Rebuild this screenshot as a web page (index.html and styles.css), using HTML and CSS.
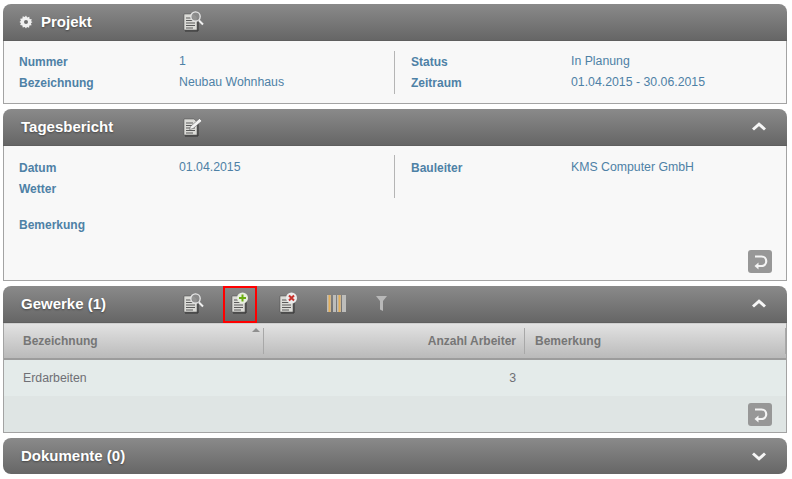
FILE: index.html
```html
<!DOCTYPE html>
<html lang="en">
<head>
    <meta charset="UTF-8">
    <title>Tagesbericht</title>
    <link rel="stylesheet" href="styles.css">
</head>
<body>
    <svg class="defs" width="0" height="0">
        <defs>
            <g id="doc">
                <path d="M1 3h10l3 3v13H1z" fill="#dcdcd8" stroke="#4a4a4a" stroke-width="0.5"/>
                <path d="M3 7h7M3 9.500h9M3 12h9M3 14.500h9M3 17h7" stroke="#5a5a5a" stroke-width="1"/>
                <path d="M2 20h13V7" fill="none" stroke="#333" stroke-width="1"/>
            </g>
            <g id="lens">
                <circle cx="12.500" cy="5.500" r="4.700" fill="#8c8c8c" fill-opacity="0.9" stroke="#e8e8e8" stroke-width="1.300"/>
                <path d="M16 9.500l4 4" stroke="#f0f0f0" stroke-width="2"/>
            </g>
            <g id="back">
                <rect width="24" height="23" rx="3" fill="#979797"/>
                <path d="M7 6.500h6.500a4.750 4.750 0 0 1 0 9.500H10" fill="none" stroke="#f4f4f4" stroke-width="2.200"/>
                <path d="M10.500 12.500L6.500 16l4 3.500z" fill="#f4f4f4"/>
            </g>
        </defs>
    </svg>

    <section class="panel">
        <header class="panel-head">
            <svg class="gear" width="14" height="14" viewBox="0 0 14 14"><path d="M7 .5l1.200 1.900 2.100-.7.300 2.200 2.200.3-.7 2.100L13.500 7l-1.600 1.200.7 2.100-2.200.3-.3 2.200-2.100-.7L7 13.500l-1.200-1.600-2.100.7-.3-2.200-2.200-.3.7-2.100L.5 7l1.400-1.200-.7-2.100 2.200-.3.3-2.200 2.100.7z" fill="#f0f0f0"/><circle cx="7" cy="7" r="2" fill="#6f6f6f"/></svg>
            <h2 class="title title-gear">Projekt</h2>
            <div class="tools">
                <svg class="tool" width="24" height="22" viewBox="0 0 24 22"><use href="#doc"/><use href="#lens"/></svg>
            </div>
        </header>
        <div class="panel-body project-body">
            <div class="form-grid">
                <div class="form-col">
                    <div class="row"><span class="label">Nummer</span><span class="value">1</span></div>
                    <div class="row"><span class="label">Bezeichnung</span><span class="value">Neubau Wohnhaus</span></div>
                </div>
                <div class="form-col col-right">
                    <div class="row"><span class="label">Status</span><span class="value">In Planung</span></div>
                    <div class="row"><span class="label">Zeitraum</span><span class="value">01.04.2015 - 30.06.2015</span></div>
                </div>
            </div>
        </div>
    </section>

    <section class="panel">
        <header class="panel-head">
            <h2 class="title">Tagesbericht</h2>
            <div class="tools">
                <svg class="tool" width="24" height="22" viewBox="0 0 24 22">
                    <use href="#doc"/>
                    <path d="M6.500 13.500l1-3 9-8 2.500 2.500-9 7.500z" fill="#f2f2f2" stroke="#555" stroke-width="0.5"/>
                </svg>
            </div>
            <svg class="chevron" width="14" height="10" viewBox="0 0 14 10"><path d="M1 7.500L7 2.200l6 5.300" fill="none" stroke="#f6f6f6" stroke-width="3"/></svg>
        </header>
        <div class="panel-body report-body">
            <div class="form-grid">
                <div class="form-col">
                    <div class="row"><span class="label">Datum</span><span class="value">01.04.2015</span></div>
                    <div class="row"><span class="label">Wetter</span></div>
                </div>
                <div class="form-col col-right">
                    <div class="row"><span class="label">Bauleiter</span><span class="value">KMS Computer GmbH</span></div>
                </div>
            </div>
            <div class="row remark"><span class="label">Bemerkung</span></div>
            <div class="actions">
                <svg width="24" height="23" viewBox="0 0 24 23"><use href="#back"/></svg>
            </div>
        </div>
    </section>

    <section class="panel">
        <header class="panel-head">
            <h2 class="title">Gewerke (1)</h2>
            <div class="tools">
                <svg class="tool" width="24" height="22" viewBox="0 0 24 22"><use href="#doc"/><use href="#lens"/></svg>
                <span class="tool-hot">
                    <svg class="tool" width="24" height="22" viewBox="0 0 24 22">
                        <use href="#doc"/>
                        <circle cx="11.500" cy="5" r="5.500" fill="#e8efe0"/>
                        <path d="M11.500 1.500v7M8 5h7" stroke="#6aae10" stroke-width="2"/>
                    </svg>
                </span>
                <svg class="tool" width="24" height="22" viewBox="0 0 24 22">
                    <use href="#doc"/>
                    <circle cx="12.500" cy="5" r="5.500" fill="#ececec"/>
                    <path d="M10 2.500l5 5M15 2.500l-5 5" stroke="#c8322c" stroke-width="2"/>
                </svg>
                <svg class="tool" width="24" height="22" viewBox="0 0 24 22">
                    <rect x="1" y="2" width="4" height="17" fill="#bdbdbb"/>
                    <rect x="2.500" y="2" width="2" height="17" fill="#e3ae58"/>
                    <rect x="7" y="2" width="3" height="17" fill="#bdbdbb"/>
                    <rect x="11" y="2" width="4" height="17" fill="#bdbdbb"/>
                    <rect x="12.500" y="2" width="2" height="17" fill="#e3ae58"/>
                    <rect x="16" y="2" width="4" height="17" fill="#bdbdbb"/>
                </svg>
                <svg class="tool" width="24" height="22" viewBox="0 0 24 22"><path d="M3 3h11l-4 5v10l-3-1.500V8z" fill="#b8b8b8"/></svg>
            </div>
            <svg class="chevron" width="14" height="10" viewBox="0 0 14 10"><path d="M1 7.500L7 2.200l6 5.300" fill="none" stroke="#f6f6f6" stroke-width="3"/></svg>
        </header>
        <div class="panel-body table-body">
            <div class="thead">
                <div class="th th-name">Bezeichnung<span class="sort"></span></div>
                <div class="th th-count">Anzahl Arbeiter</div>
                <div class="th th-note">Bemerkung</div>
            </div>
            <div class="tr">
                <div class="td th-name">Erdarbeiten</div>
                <div class="td th-count">3</div>
                <div class="td th-note"></div>
            </div>
            <div class="table-foot">
                <svg width="24" height="23" viewBox="0 0 24 23"><use href="#back"/></svg>
            </div>
        </div>
    </section>

    <section class="panel">
        <header class="panel-head closed">
            <h2 class="title">Dokumente (0)</h2>
            <svg class="chevron" width="14" height="10" viewBox="0 0 14 10"><path d="M1 2.500L7 7.800l6-5.300" fill="none" stroke="#f6f6f6" stroke-width="3"/></svg>
        </header>
    </section>
</body>
</html>
```

FILE: styles.css
```css
body {
    margin: 0;
    padding: 4px 5px 0 3px;
    background: white;
    font-family: "Liberation Sans", Arial, sans-serif;
    font-size: 12px;
}
.defs {
    position: absolute;
}
.panel {
    margin-bottom: 5px;
}
.panel-head {
    display: flex;
    align-items: center;
    height: 37px;
    padding: 0 21px 0 18px;
    border-radius: 8px 8px 0 0;
    background: linear-gradient(#8a8a8a, #666666);
    border-bottom: 1px solid #5f5f5f;
    box-sizing: border-box;
}
.panel-head.closed {
    height: 36px;
    border-radius: 8px;
    border-bottom: none;
}
.gear {
    margin: 0 8px 0 -2px;
}
.title {
    width: 162px;
    margin: -2px 0 0;
    font-size: 15px;
    font-weight: bold;
    color: white;
    text-shadow: 0 1px 2px rgba(0,0,0,0.4);
}
.title-gear {
    width: 142px;
}
.tools {
    display: flex;
    align-items: center;
    flex: 1;
    gap: 23px;
}
.tool {
    display: block;
    overflow: visible;
}
.tool-hot {
    display: flex;
    align-items: center;
    width: 34px;
    height: 37px;
    margin: 0 -1px 0 -7px;
    padding-left: 6px;
    border: 2px solid #f00;
    box-sizing: border-box;
}
.chevron {
    margin-left: auto;
}
.panel-body {
    border: 1px solid #a3a3a3;
    border-top: none;
    background: #f8f8f8;
    box-sizing: border-box;
}
.project-body {
    height: 63px;
    padding-top: 10px;
}
.report-body {
    height: 135px;
    padding-top: 9px;
}
.form-grid {
    display: flex;
}
.form-col {
    width: 390px;
    padding: 1px 0 0 15px;
    box-sizing: border-box;
}
.col-right {
    border-left: 1px solid #b5b5b5;
    padding-left: 16px;
}
.report-body .form-col {
    height: 43px;
    padding-top: 3px;
}
.row {
    display: flex;
    height: 21px;
    line-height: 21px;
}
.label {
    width: 160px;
    font-weight: bold;
    color: #4e81a6;
}
.value {
    margin-top: -1px;
    font-size: 12.3px;
    color: #4e81a6;
}
.remark {
    margin: 17px 0 0 15px;
}
.actions {
    display: flex;
    justify-content: flex-end;
    margin: 14px 14px 0 0;
}
.table-body {
    background: #dfe5e4;
}
.thead {
    display: flex;
    height: 37px;
    border-top: 1px solid #cfcfcf;
    border-bottom: 2px solid #9c9c9c;
    background: linear-gradient(#e2e2e2, #bababa);
    box-sizing: border-box;
}
.th {
    position: relative;
    font-weight: bold;
    color: #767676;
}
.th-name {
    width: 260px;
    padding-left: 19px;
    box-sizing: border-box;
}
.th-count {
    width: 261px;
    padding-right: 8px;
    text-align: right;
    box-sizing: border-box;
}
.th-note {
    flex: 1;
    padding-left: 10px;
}
.thead .th {
    height: 26px;
    margin-top: 4px;
    line-height: 26px;
    border-right: 1px solid #a8a8a8;
}
.sort {
    position: absolute;
    top: 0;
    right: 3px;
    border: 4px solid transparent;
    border-top: none;
    border-bottom: 4px solid #8f8f8f;
}
.tr {
    display: flex;
    height: 36px;
    background: #e4ebea;
}
.td {
    font-size: 12.3px;
    line-height: 36px;
    color: #6f6f75;
}
.td.th-count {
    padding-right: 9px;
}
.table-foot {
    display: flex;
    justify-content: flex-end;
    align-items: center;
    height: 36px;
    padding-right: 14px;
}
```
